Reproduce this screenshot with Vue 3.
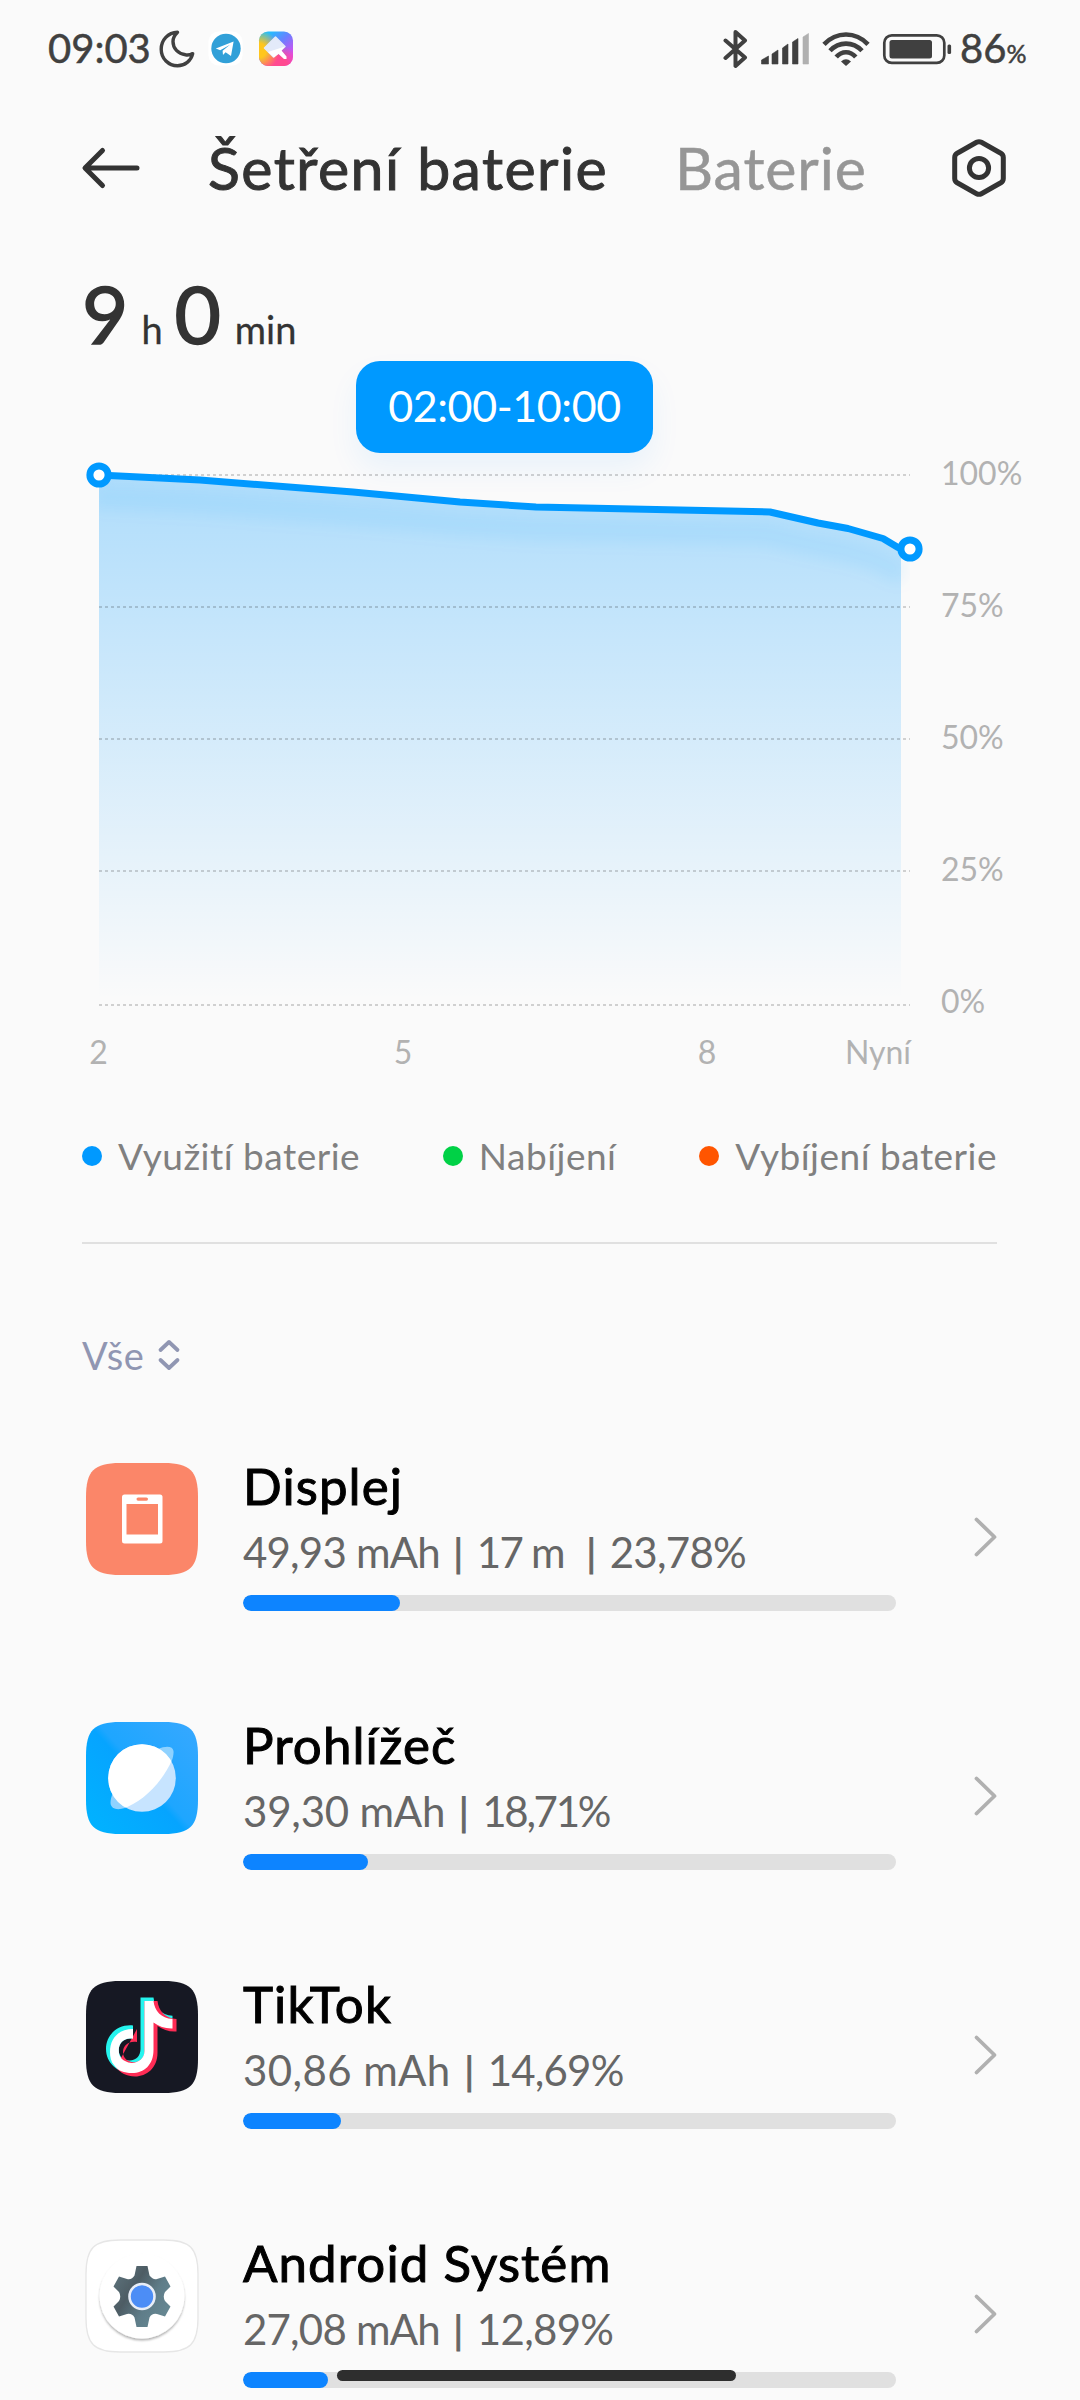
<script setup>
const apps = [
  { id: 'display', name: 'Displej', parts: ['49,93 mAh', '17 m\u00a0', '23,78%'], width: 157 },
  { id: 'browser', name: 'Prohlížeč', parts: ['39,30 mAh', '18,71%'], width: 125 },
  { id: 'tiktok', name: 'TikTok', parts: ['30,86 mAh', '14,69%'], width: 98 },
  { id: 'android', name: 'Android Systém', parts: ['27,08 mAh', '12,89%'], width: 85 },
]

const legend = [
  { label: 'Využití baterie', tone: 'blue' },
  { label: 'Nabíjení', tone: 'green' },
  { label: 'Vybíjení baterie', tone: 'orange' },
]

const grid = [
  { y: 475, ty: 485, label: '100%' },
  { y: 607, ty: 617, label: '75%' },
  { y: 739, ty: 749, label: '50%' },
  { y: 871, ty: 881, label: '25%' },
  { y: 1005, ty: 1013, label: '0%' },
]

const hours = [
  { x: 98.5, label: '2' },
  { x: 403, label: '5' },
  { x: 707, label: '8' },
]

const line = '99,475 200,480 353,492 460,502 536,507 770,512 818,523 848,528.5 883,538.5 898,547.5 910,549'
const area = 'M99 475L200 480L353 492L460 502L536 507L770 512L818 523L848 528.5L883 538.5L901 548V1004H99Z'
</script>

<template>
  <main class="screen">
    <header class="status">
      <span class="clock">09:03</span>
      <svg class="moon" width="36" height="38" viewBox="0 0 36 38">
        <path d="M18.5 2.3C9 2.600 2.200 10 2.200 19.200C2.200 28.600 9.500 35.800 18.500 35.800C26 35.800 32 30.800 33.700 23.600C31.500 24.800 29 25.400 26.500 24.800C19 23.800 14 18.500 14 11.500C14 8 15.800 5 18.500 2.300Z" fill="none" stroke="#404040" stroke-width="3.4" stroke-linejoin="round" />
      </svg>
      <svg class="telegram" width="36" height="36" viewBox="0 0 36 36">
        <rect x="0.500" y="0.500" width="34" height="34" rx="10" fill="#fff" />
        <circle cx="18" cy="17.500" r="14.700" fill="#31a0d8" />
        <path d="M7.800 17.600L25.600 10.600L23 25L17.600 21.200L15 24L14.600 19.700L22 13.700L12.200 19.300Z" fill="#fff" />
      </svg>
      <svg class="theme" width="36" height="36" viewBox="0 0 36 36">
        <defs>
          <radialGradient id="thYellow" cx="0" cy="0.550" r="0.600"><stop offset="0" stop-color="#ffc61c" /><stop offset="0.350" stop-color="#ffc61c" /><stop offset="1" stop-color="#ffc61c" stop-opacity="0" /></radialGradient>
          <radialGradient id="thPink" cx="0.500" cy="1.100" r="0.750"><stop offset="0" stop-color="#ff4a90" /><stop offset="0.500" stop-color="#ff4a90" /><stop offset="1" stop-color="#ff4a90" stop-opacity="0" /></radialGradient>
          <linearGradient id="thBase" x1="0.350" y1="0" x2="0.950" y2="0.700">
            <stop offset="0" stop-color="#22bdff" /><stop offset="0.450" stop-color="#6a80ff" /><stop offset="1" stop-color="#dc4af0" />
          </linearGradient>
        </defs>
        <rect x="1" y="0.500" width="34" height="34.500" rx="9" fill="url(#thBase)" />
        <rect x="1" y="0.500" width="34" height="34.500" rx="9" fill="url(#thPink)" />
        <rect x="1" y="0.500" width="34" height="34.500" rx="9" fill="url(#thYellow)" />
        <path d="M17.500 6L27 15.500L15.500 26L6.500 17Z" fill="#e3eaf9" stroke="#e3eaf9" stroke-width="1.500" stroke-linejoin="round" />
        <path d="M10 21L27 15.500L23.500 19.500L28.500 25.500V28H26L20.500 23L16 26.500Z" fill="#fff" />
      </svg>

      <svg class="bluetooth" width="26" height="40" viewBox="0 0 26 40">
        <path d="M2.500 11.500L22 28.500L12.500 37V3L22 11.500L2.500 29" fill="none" stroke="#404040" stroke-width="4" stroke-linejoin="round" stroke-linecap="round" />
      </svg>
      <svg class="signal" width="50" height="34" viewBox="0 0 50 34">
        <path d="M0.500 28L7.500 24V32H0.500ZM11 22L17 18V32H11ZM21.500 16L27 12V32H21.500ZM31.500 10L37 6.500V32H31.500Z" fill="#404040" stroke="#404040" stroke-width="0.600" stroke-linejoin="round" />
        <path d="M42 5L47.500 1.500V32H42Z" fill="#b0b0b0" stroke="#b0b0b0" stroke-width="0.600" stroke-linejoin="round" />
      </svg>
      <svg class="wifi" width="48" height="36" viewBox="0 0 48 36">
        <g fill="none" stroke="#404040" stroke-width="4.600">
          <path d="M2 13.300C14.500 0.200 33.500 0.200 46 13.300" />
          <path d="M8 19.800C17 10.200 31 10.200 40 19.800" />
          <path d="M14.200 26C19.800 19.600 28.200 19.600 33.800 26" />
        </g>
        <path d="M19 30.500Q24 26 29 30.500L24 35Z" fill="#404040" />
      </svg>
      <svg class="battery" width="72" height="32" viewBox="0 0 72 32">
        <rect x="2.300" y="2.300" width="60" height="27.600" rx="7.500" fill="none" stroke="#404040" stroke-width="2.700" />
        <rect x="7.500" y="7" width="42.500" height="18.500" rx="2.500" fill="#404040" />
        <rect x="65.500" y="11.500" width="3.600" height="9.500" rx="1.500" fill="#404040" />
      </svg>
      <span class="level">86<small>%</small></span>
    </header>

    <nav class="tabs">
      <svg class="back" width="60" height="44" viewBox="0 0 60 44">
        <path d="M21.500 4.500L4 22L21.500 39.500M4.500 22H56" fill="none" stroke="#333" stroke-width="5" stroke-linecap="round" stroke-linejoin="round" />
      </svg>
      <span class="tab active">Šetření baterie</span>
      <span class="tab other">Baterie</span>
      <svg class="gear" width="60" height="64" viewBox="0 0 60 64">
        <path d="M27.600 6.300Q30 5 32.400 6.300L51.800 17.200Q54.300 18.700 54.300 21.500V42.500Q54.300 45.300 51.800 46.800L32.400 57.700Q30 59 27.600 57.700L8.200 46.800Q5.700 45.300 5.700 42.500V21.500Q5.700 18.700 8.200 17.200Z" fill="none" stroke="#333" stroke-width="5" stroke-linejoin="round" />
        <circle cx="30" cy="32" r="9.600" fill="none" stroke="#333" stroke-width="5" />
      </svg>
    </nav>

    <div class="duration">
      <b class="d-hours">9</b><span class="u-hours">h</span><b class="d-mins">0</b><span class="u-mins">min</span>
    </div>

    <section class="chart">
      <svg width="1080" height="727" viewBox="0 363 1080 727">
        <defs>
          <linearGradient id="fill" gradientUnits="userSpaceOnUse" x1="0" y1="475" x2="0" y2="1000">
            <stop offset="0" stop-color="#09f" stop-opacity="0.300" />
            <stop offset="1" stop-color="#09f" stop-opacity="0" />
          </linearGradient>
          <filter id="soft" filterUnits="userSpaceOnUse" x="60" y="440" width="880" height="200">
            <feGaussianBlur stdDeviation="7" />
          </filter>
          <clipPath id="under"><path d="M99 475L200 480L353 492L460 502L536 507L770 512L818 523L848 528.500L883 538.500L910 549V700H99Z" /></clipPath>
        </defs>
        <path :d="area" fill="url(#fill)" />
        <g clip-path="url(#under)">
          <polyline :points="line" transform="translate(-5 22)" fill="none" stroke="#09f" stroke-opacity="0.070" stroke-width="24" filter="url(#soft)" />
        </g>
        <g v-for="g in grid" :key="g.label">
          <line x1="99" :y1="g.y" x2="910" :y2="g.y" class="rule" />
          <text x="941" :y="g.ty" class="axis">{{ g.label }}</text>
        </g>
        <polyline :points="line" fill="none" stroke="#09f" stroke-width="7" stroke-linejoin="round" />
        <circle cx="99" cy="475" r="9.100" fill="#fff" stroke="#09f" stroke-width="7" />
        <circle cx="910" cy="549" r="9.100" fill="#fff" stroke="#09f" stroke-width="7" />
        <text v-for="h in hours" :key="h.label" :x="h.x" y="1064" text-anchor="middle" class="axis">{{ h.label }}</text>
        <text x="911" y="1064" text-anchor="end" class="axis">Nyní</text>
      </svg>
      <div class="tooltip">02:00-10:00</div>
    </section>

    <ul class="legend">
      <li v-for="l in legend" :key="l.tone" :class="l.tone"><i></i><span>{{ l.label }}</span></li>
    </ul>
    <hr class="divider">

    <div class="filter">
      <span>Vše</span>
      <svg width="24" height="32" viewBox="0 0 24 32">
        <path d="M3.500 11L12 3L20.500 11M3.500 21L12 29L20.500 21" fill="none" stroke="#9096b2" stroke-width="3.800" stroke-linecap="round" stroke-linejoin="round" />
      </svg>
    </div>

    <section class="list">
      <article v-for="app in apps" :key="app.id" class="item" :class="app.id">
        <svg class="icon" width="114" height="114" viewBox="-1 -1 114 114">
          <template v-if="app.id === 'display'">
            <path d="M0 34C0 8 8 0 34 0H78C104 0 112 8 112 34V78C112 104 104 112 78 112H34C8 112 0 104 0 78Z" fill="#fb8669" />
            <rect x="36" y="31.500" width="40.500" height="49" rx="2.500" fill="#fff" />
            <rect x="40.500" y="41" width="31.500" height="30.500" fill="#fb8669" />
            <rect x="50.500" y="34.500" width="11.500" height="3.200" rx="1.600" fill="#fb8669" />
          </template>
          <template v-else-if="app.id === 'browser'">
            <defs>
              <linearGradient id="br" x1="0" y1="1" x2="1" y2="0.100">
                <stop offset="0" stop-color="#00b4ff" /><stop offset="0.500" stop-color="#06a4ff" /><stop offset="0.550" stop-color="#1ea6ff" /><stop offset="1" stop-color="#35a8ff" />
              </linearGradient>
              <clipPath id="globe"><circle cx="56" cy="56" r="33.800" /></clipPath>
            </defs>
            <path d="M0 34C0 8 8 0 34 0H78C104 0 112 8 112 34V78C112 104 104 112 78 112H34C8 112 0 104 0 78Z" fill="url(#br)" />
            <path d="M72 27C80 23.500 87 24 87.500 29C88 34 85.500 41 81 49C70 67 52 81 39 86C31 88.500 25 87 24.500 81C24.500 77 25.500 74 27 71Z" fill="#8fd2ff" />
            <circle cx="56" cy="56" r="33.800" fill="#c7e4ff" />
            <path d="M15 15H90L86 38C76 61 55 81 38 86L15 90Z" fill="#fff" clip-path="url(#globe)" />
          </template>
          <template v-else-if="app.id === 'tiktok'">
            <path d="M0 34C0 8 8 0 34 0H78C104 0 112 8 112 34V78C112 104 104 112 78 112H34C8 112 0 104 0 78Z" fill="#161823" />
            <path d="M47 44.500V57.800C39 56 32.800 61.500 32.800 69C32.800 76 38 79.500 43.500 79.500C50.500 79.500 54.500 74.500 54.500 68V16.500H67.500C68.500 26.500 75 34 86.500 34.800V47.500C79.500 47.800 73 45.500 67.500 41.500V69C67.500 84 56.500 92 45 92C31 92 20 81.500 20 68C20 53.500 32 43 47 44.500Z" fill="#25f4ee" />
            <path d="M51 48V61C43 59.500 37 64.500 37 71C37 76 40 79 43 80C50 84 58.500 78 58.500 71V20H71.500C72.500 29.500 79 37.500 90.500 38V50.500C83 51 77 48.500 71.500 45V72C71.500 87 60.500 95.500 49 95.500C41 95.500 34 92 30 86Z" fill="#fe2c55" />
            <path d="M47 48V57.800C39 56 32.800 61.500 32.800 69C32.800 75 35 78 39 80C47 85 58.500 80 58.500 70V20H67.500C68.500 29.500 75 37.500 86.500 38V47.500C79.500 47.800 73 45.500 67.500 41.500V69C67.500 84 58 92 46 92C38 92 32 90 28 84C25 81 24 76 24 71C24 57 33 48 47 48Z" fill="#fff" />
          </template>
          <template v-else>
            <defs>
              <linearGradient id="cog" x1="0" y1="0" x2="1" y2="0.700">
                <stop offset="0" stop-color="#607780" /><stop offset="0.400" stop-color="#4d5c64" /><stop offset="0.700" stop-color="#5f7d89" /><stop offset="1" stop-color="#668792" />
              </linearGradient>
              <filter id="drop" x="-20%" y="-20%" width="140%" height="150%"><feDropShadow dx="0" dy="2" stdDeviation="1.300" flood-opacity="0.300" /></filter>
            </defs>
            <path d="M0 34C0 8 8 0 34 0H78C104 0 112 8 112 34V78C112 104 104 112 78 112H34C8 112 0 104 0 78Z" fill="#fff" stroke="#e6e6e6" stroke-width="1.300" />
            <circle cx="56" cy="56" r="42.500" fill="#fff" filter="url(#drop)" />
            <path d="M50.500 26H61.500L63.500 35.500Q67 40 71 39L79 36.500L84.500 46.500L79 52Q76.500 56.500 79 61L84.500 66.500L79 76.500L71 74Q66 73 63.500 77.500L61.500 87H50.500L48.500 77.500Q46 73 41 74L33 76.500L27.500 66.500L33 61Q35.500 56.500 33 52L27.500 46.500L33 36.500L41 39Q46 40 48.500 35.500Z" fill="url(#cog)" />
            <circle cx="56" cy="56.500" r="12.500" fill="#4c8df6" stroke="#e8edf7" stroke-width="2.600" />
          </template>
        </svg>
        <div class="info">
          <div class="name">{{ app.name }}</div>
          <div class="usage">
            <template v-for="(p, i) in app.parts" :key="i"><em v-if="i">|</em><span :class="'part' + i">{{ p }}</span></template>
          </div>
          <div class="track"><div class="value" :style="{ width: app.width + 'px' }"></div></div>
        </div>
        <svg class="chevron" width="26" height="42" viewBox="0 0 26 42">
          <path d="M3.500 3.500L21.500 21L3.500 38.500" fill="none" stroke="#b0b0b0" stroke-width="3.800" stroke-linecap="round" stroke-linejoin="round" />
        </svg>
      </article>
    </section>
    <div class="home"></div>
  </main>
</template>

<style>
body { background: #fafafa; }
</style>

<style scoped>
.screen {
  position: relative;
  width: 1080px;
  height: 2400px;
  overflow: hidden;
  background: #fafafa;
  font-family: Lato, "Noto Sans", sans-serif;
  font-variant-ligatures: none;
  color: #333;
  display: flex;
  flex-direction: column;
}
.screen > * { flex-shrink: 0; }
svg { display: block; flex-shrink: 0; }

.status { height: 98px; display: flex; align-items: center; padding-left: 48px; }
.clock, .level { font-size: 40px; line-height: 96px; height: 98px; color: #404040; -webkit-text-stroke: 0.5px #404040; white-space: nowrap; }
.clock { width: 111px; }
.telegram { margin-left: 13px; }
.theme { margin-left: 14px; }
.bluetooth { margin-left: 429px; }
.signal { margin-left: 12px; }
.wifi { margin-left: 11px; }
.battery { margin-left: 12px; }
.level { margin-left: 6px; }
.level small { font-size: 25px; }

.tabs { height: 140px; display: flex; align-items: center; padding-left: 81px; line-height: 140px; font-size: 59px; white-space: nowrap; }
.tab.active { margin-left: 67px; width: 467px; letter-spacing: 1.45px; -webkit-text-stroke: 1px #333; }
.tab.other { width: 274px; letter-spacing: 0.9px; color: #969696; -webkit-text-stroke: 0.5px #969696; }

.duration { display: flex; align-items: baseline; height: 100px; margin: 25px 0 0 82px; line-height: 100px; font-size: 38px; }
.duration b { font-size: 80px; font-weight: 400; -webkit-text-stroke: 1.6px #333; }
.u-hours { width: 33px; margin-left: 13px; }
.u-mins { margin-left: 14px; }
.duration span { -webkit-text-stroke: 0.3px #333; }

.chart { position: relative; height: 727px; }
.rule { stroke: #000; stroke-opacity: 0.17; stroke-width: 2; stroke-dasharray: 3 3; }
.axis { font-size: 32px; fill: #b2b2b2; }
.tooltip {
  position: absolute;
  left: 356px;
  top: -2px;
  width: 297px;
  height: 92px;
  border-radius: 24px;
  background: #09f;
  color: #fff;
  font-size: 43px;
  letter-spacing: -0.4px;
  line-height: 90px;
  text-align: center;
  box-shadow: 0 16px 30px rgba(0, 140, 255, 0.07);
}

.legend { list-style: none; margin: 42px 83px 0 82px; padding: 0; height: 48px; display: flex; justify-content: space-between; font-size: 37px; line-height: 48px; letter-spacing: 0.5px; color: #808080; }
.legend li { display: flex; align-items: center; }
.legend i { width: 20px; height: 20px; border-radius: 50%; margin-right: 16px; }
.blue i { background: #09f; }
.green i { background: #00d146; }
.orange i { background: #ff5500; }
.divider { width: 915px; height: 2px; margin: 62px 0 0 82px; border: 0; background: #e0e0e0; }

.filter { display: flex; align-items: center; height: 50px; margin: 86px 0 0 82px; font-size: 38px; line-height: 52px; letter-spacing: 0.4px; color: #9096b2; }
.filter svg { margin-left: 13px; }

.list { margin-top: 63px; }
.item { display: flex; height: 259px; padding-left: 85px; }
.icon { margin-top: 19px; }
.info { width: 653px; margin-left: 44px; padding-top: 13px; }
.name { font-size: 51px; line-height: 60px; letter-spacing: 1.1px; color: #000; -webkit-text-stroke: 1px #000; white-space: nowrap; }
.usage { display: flex; margin-top: 11px; font-size: 42px; line-height: 50px; color: #666; white-space: nowrap; }
.usage em { font-style: normal; font-size: 38px; width: 37px; text-align: center; -webkit-text-stroke: 1px #666; }
.display .part0 { letter-spacing: -0.8px; }
.display .part1 { letter-spacing: -1.8px; }
.display .part2 { letter-spacing: -0.7px; }
.browser .part0 { letter-spacing: -0.2px; }
.browser .part1 { letter-spacing: -2.3px; }
.tiktok .part0 { letter-spacing: 0.4px; }
.tiktok .part1 { letter-spacing: -0.8px; }
.android .part0 { letter-spacing: -0.8px; }
.android .part1 { letter-spacing: -0.7px; }
.track { height: 16px; margin-top: 18px; border-radius: 8px; background: #e0e0e0; overflow: hidden; }
.value { height: 16px; border-radius: 8px; background: #0d84ff; }
.chevron { margin: 73px 0 0 77px; }

.home { position: absolute; left: 337px; top: 2370px; width: 399px; height: 11px; border-radius: 6px; background: #2e2e2e; }
</style>
